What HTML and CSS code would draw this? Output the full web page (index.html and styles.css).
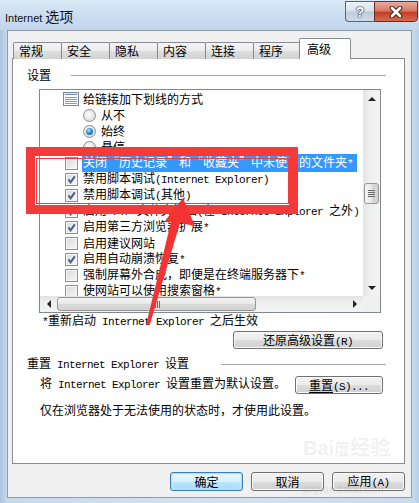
FILE: index.html
```html
<!DOCTYPE html>
<html lang="zh-CN">
<head>
  <meta charset="UTF-8" />
  <meta name="viewport" content="width=device-width, initial-scale=1.0"/>
  <title>Internet 选项</title>
  <link rel="stylesheet" href="styles.css">
</head>
<body>
  <div class="window">
    <div class="titlebar">
      <span class="title">Internet <span class="title-cn">选项</span></span>
      <div class="caption">
        <span class="cap-btn help">?</span>
        <span class="cap-btn close">
          <svg width="16" height="12" viewBox="0 0 16 12">
            <path d="M4 2 L12 10 M12 2 L4 10" stroke="#4a2a24" stroke-width="4.6" stroke-linecap="round"/>
            <path d="M4 2 L12 10 M12 2 L4 10" stroke="#fff" stroke-width="2.6" stroke-linecap="round"/>
          </svg>
        </span>
      </div>
    </div>

    <div class="client">
      <ul class="tabs">
        <li>常规</li>
        <li>安全</li>
        <li>隐私</li>
        <li>内容</li>
        <li>连接</li>
        <li>程序</li>
        <li class="active">高级</li>
      </ul>

      <div class="panel">
        <div class="group-head">
          <span>设置</span>
          <i class="rule rule-first"></i>
        </div>

        <div class="listbox">
          <div class="rows">
            <div class="row">
              <svg class="ico" width="16" height="14" viewBox="0 0 16 14">
                <rect x="0.5" y="0.5" width="15" height="13" fill="#fff" stroke="#7d8896"/>
                <rect x="1" y="1" width="14" height="2" fill="#dfe6ee"/>
                <path d="M2 2.5 H14" stroke="#6f8fb8"/>
                <path d="M2 5.5 H14 M2 7.5 H14 M2 9.5 H14 M2 11.5 H14" stroke="#8d98a6"/>
              </svg>
              <span>给链接加下划线的方式</span>
            </div>
            <div class="row radio"><span class="rb"></span><span>从不</span></div>
            <div class="row radio"><span class="rb on"></span><span>始终</span></div>
            <div class="row radio"><span class="rb"></span><span>悬停</span></div>
            <div class="row">
              <span class="cb"></span>
              <span class="sel">关闭“历史记录”和“收藏夹”中未使用的文件夹<span class="en">*</span></span>
            </div>
            <div class="row">
              <span class="cb"><svg viewBox="0 0 11 11"><path d="M2.5 5.5 L4.6 8.3 L8.8 2.4"/></svg></span>
              <span>禁用脚本调试<span class="en">(Internet Explorer)</span></span>
            </div>
            <div class="row">
              <span class="cb"><svg viewBox="0 0 11 11"><path d="M2.5 5.5 L4.6 8.3 L8.8 2.4"/></svg></span>
              <span>禁用脚本调试<span class="en">(</span>其他<span class="en">)</span></span>
            </div>
            <div class="row">
              <span class="cb"><svg viewBox="0 0 11 11"><path d="M2.5 5.5 L4.6 8.3 L8.8 2.4"/></svg></span>
              <span>启用<span class="en"> FTP </span>文件夹视图<span class="en">(</span>在<span class="en"> Internet Explorer </span>之外<span class="en">)</span></span>
            </div>
            <div class="row">
              <span class="cb"><svg viewBox="0 0 11 11"><path d="M2.5 5.5 L4.6 8.3 L8.8 2.4"/></svg></span>
              <span>启用第三方浏览器扩展<span class="en">*</span></span>
            </div>
            <div class="row"><span class="cb"></span><span>启用建议网站</span></div>
            <div class="row">
              <span class="cb"><svg viewBox="0 0 11 11"><path d="M2.5 5.5 L4.6 8.3 L8.8 2.4"/></svg></span>
              <span>启用自动崩溃恢复<span class="en">*</span></span>
            </div>
            <div class="row"><span class="cb"></span><span>强制屏幕外合成，即便是在终端服务器下<span class="en">*</span></span></div>
            <div class="row"><span class="cb"></span><span>使网站可以使用搜索窗格<span class="en">*</span></span></div>
          </div>

          <div class="vscroll">
            <div class="sb-btn"><i class="tri up"></i></div>
            <div class="sb-gap v-top"></div>
            <div class="thumb v-thumb"><i></i><i></i><i></i><i></i></div>
            <div class="sb-gap v-rest"></div>
            <div class="sb-btn"><i class="tri down"></i></div>
          </div>
          <div class="hscroll">
            <div class="sb-btn"><i class="tri left"></i></div>
            <div class="thumb h-thumb"><i></i><i></i><i></i><i></i></div>
            <div class="sb-gap h-rest"></div>
            <div class="sb-btn"><i class="tri right"></i></div>
          </div>
          <div class="corner"></div>
        </div>

        <p class="note"><span class="en">*</span>重新启动<span class="en"> Internet Explorer </span>之后生效</p>

        <div class="restore-row">
          <button class="btn restore">还原高级设置<span class="en">(R)</span></button>
        </div>

        <div class="group-head second">
          <span>重置<span class="en"> Internet Explorer </span>设置</span>
          <i class="rule rule-second"></i>
        </div>

        <div class="reset-row">
          <span class="reset-text">将<span class="en"> Internet Explorer </span>设置重置为默认设置。</span>
          <button class="btn reset"><u>重置</u><span class="en">(S)...</span></button>
        </div>

        <p class="hint">仅在浏览器处于无法使用的状态时，才使用此设置。</p>
      </div>

      <div class="actions">
        <button class="btn default">确定</button>
        <button class="btn">取消</button>
        <button class="btn">应用<span class="en">(A)</span></button>
      </div>
    </div>

    <!-- annotation drawn over the dialog -->
    <div class="mark"></div>
    <svg class="arrow" width="419" height="503" viewBox="0 0 419 503">
      <polygon points="183,198 195,226 180,223 150,324 146,325 171,222 164,222" fill="#f53232"/>
    </svg>
    <div class="watermark">Bai<span>度</span>经验<small>jingyan.baidu.com</small></div>
  </div>
</body>
</html>
```

FILE: styles.css
```css
* {
  box-sizing: border-box;
  margin: 0;
  padding: 0;
}

body {
  width: 419px;
  height: 503px;
  overflow: hidden;
  font-family: "Noto Sans CJK SC", sans-serif;
  font-size: 12px;
  color: #000;
  background: #c4d8ec;
}

.en {
  font-family: "Liberation Mono", monospace;
  font-size: 11px;
  letter-spacing: -0.6px;
}

.window {
  position: relative;
  height: 503px;
  display: flex;
  flex-direction: column;
  padding: 0 7px 5px 7px;
  background: linear-gradient(90deg, #a9c4dd 0px, #c6daee 7px, #d2e2f2 50%, #c9dcef 412px, #b7cfe6 419px);
}

/* title bar */
.titlebar {
  height: 30px;
  display: flex;
  align-items: flex-start;
  background: linear-gradient(180deg, #dbe8f5 0%, #c9dcef 60%, #c2d6eb 100%);
  margin: 0 -7px;
  padding: 0 7px;
}

.title {
  margin: 8px 0 0 -2px;
  font-family: "Liberation Sans", "Noto Sans CJK SC", sans-serif;
  font-size: 11px;
  line-height: 16px;
  color: #111;
}

.title-cn {
  font-family: "Noto Sans CJK SC", sans-serif;
  font-size: 14px;
}

.caption {
  margin: 1px -6px 0 auto;
  display: flex;
}

.cap-btn {
  height: 21px;
  display: flex;
  align-items: center;
  justify-content: center;
  border: 1px solid #56657a;
}

.help {
  width: 29px;
  border-right: none;
  border-radius: 0 0 0 4px;
  background: linear-gradient(180deg, #edf2f8 0%, #d8e2ed 48%, #bccbdc 52%, #cfdbe8 100%);
  font-family: "Liberation Sans", sans-serif;
  font-weight: bold;
  font-size: 14px;
  color: #fff;
  text-shadow: 0 0 1px #2c3a4c, 0 0 1px #2c3a4c, 0 0 2px #2c3a4c;
}

.close {
  width: 44px;
  border-color: #6b2b20;
  border-radius: 0 0 4px 0;
  background: linear-gradient(180deg, #e9aa9c 0%, #d97a66 45%, #c3412b 55%, #d46a4e 100%);
}

/* client area */
.client {
  flex: 1;
  background: #f0f0f0;
  border: 1px solid #8e9bab;
  padding: 7px 6px 0 4px;
  display: flex;
  flex-direction: column;
}

.tabs {
  display: flex;
  align-items: flex-end;
  list-style: none;
  height: 21px;
  margin: 0 0 -1px 1px;
  position: relative;
  z-index: 1;
}

.tabs li {
  width: 49px;
  height: 17px;
  margin-right: -1px;
  padding-left: 5px;
  line-height: 16px;
  border: 1px solid #898c95;
  border-bottom: none;
  border-radius: 2px 2px 0 0;
  background: linear-gradient(180deg, #f4f4f4 0%, #ebebeb 50%, #dedede 51%, #d3d3d3 100%);
}

.tabs li.active {
  width: 52px;
  height: 21px;
  margin-left: -2px;
  padding-left: 7px;
  line-height: 19px;
  background: #fff;
  position: relative;
}

.panel {
  height: 406px;
  background: #fff;
  border: 1px solid #898c95;
  padding: 8px 18px 0 14px;
}

.group-head {
  height: 16px;
  display: flex;
  align-items: center;
  line-height: 16px;
  white-space: nowrap;
}

.rule {
  flex: 1;
  height: 1px;
  background: #a5a5a5;
}

.rule-first {
  margin-left: 20px;
}

.rule-second {
  margin-left: 32px;
}

/* list with scroll bars */
.listbox {
  width: 342px;
  height: 224px;
  margin: 6px 0 0 12px;
  border: 1px solid #828790;
  background: #fff;
  display: grid;
  grid-template-columns: 1fr 17px;
  grid-template-rows: 1fr 16px;
}

.rows {
  overflow: hidden;
  padding-top: 1px;
}

.row {
  height: 16px;
  display: flex;
  align-items: center;
  padding-left: 25px;
  line-height: 16px;
  white-space: nowrap;
}

.row .ico {
  margin: 0 4px 0 -2px;
  flex: none;
}

.row.radio {
  padding-left: 43px;
}

.cb,
.rb {
  width: 13px;
  height: 13px;
  margin-right: 5px;
  flex: none;
  border: 1px solid #8e8f8f;
  display: flex;
  align-items: center;
  justify-content: center;
}

.cb {
  background: linear-gradient(135deg, #d8d8d8, #f8f8f8);
  box-shadow: inset 0 0 0 1px #f6f6f6;
}

.cb svg {
  width: 11px;
  height: 11px;
  fill: none;
  stroke: #3f5a99;
  stroke-width: 1.9;
}

.rb {
  border-radius: 50%;
  background: radial-gradient(circle at 45% 40%, #fdfdfd 0%, #e4e4e4 60%, #cfcfcf 100%);
}

.rb.on::after {
  content: "";
  width: 7px;
  height: 7px;
  border-radius: 50%;
  background: radial-gradient(circle at 40% 35%, #b5e6ff 0%, #2f8fd8 45%, #0c4a8c 100%);
}

.sel {
  background: #3399ff;
  color: #fff;
  padding: 0 4px 0 1px;
  margin-left: -1px;
}

.vscroll,
.hscroll {
  display: flex;
  background: #ececec;
}

.vscroll {
  flex-direction: column;
  background: linear-gradient(90deg, #e3e3e3, #efefef 40%, #f4f4f4);
}

.hscroll {
  background: linear-gradient(180deg, #e3e3e3, #efefef 40%, #f4f4f4);
}

.sb-btn {
  width: 17px;
  height: 17px;
  flex: none;
  display: flex;
  align-items: center;
  justify-content: center;
}

.hscroll .sb-btn {
  height: 16px;
}

.tri {
  width: 0;
  height: 0;
  border: 4px solid transparent;
}

.tri.up {
  border-bottom-color: #222;
  border-top-width: 0;
}

.tri.down {
  border-top-color: #222;
  border-bottom-width: 0;
}

.tri.left {
  border-right-color: #222;
  border-left-width: 0;
}

.tri.right {
  border-left-color: #222;
  border-right-width: 0;
}

.v-top {
  height: 118px;
  flex: none;
}

.sb-gap {
  flex: 1;
}

.thumb {
  flex: none;
  border: 1px solid #979797;
  border-radius: 3px;
  display: flex;
  align-items: center;
  justify-content: center;
  gap: 1px;
}

.v-thumb {
  height: 21px;
  margin: 0 1px;
  flex-direction: column;
  background: linear-gradient(90deg, #f4f4f4, #e9e9e9 50%, #dadada 51%, #d2d2d2);
}

.v-thumb i {
  width: 7px;
  height: 1px;
  background: #6a6a6a;
}

.h-thumb {
  width: 199px;
  margin: 1px 0;
  background: linear-gradient(180deg, #f4f4f4, #e9e9e9 50%, #dadada 51%, #d2d2d2);
}

.h-thumb i {
  width: 1px;
  height: 7px;
  background: #6a6a6a;
}

.corner {
  background: #f0f0f0;
}

.note {
  margin-left: 15px;
  line-height: 14px;
  height: 14px;
  white-space: nowrap;
}

/* buttons */
.btn {
  font-family: "Noto Sans CJK SC", sans-serif;
  font-size: 12px;
  line-height: 15px;
  color: #000;
  height: 19px;
  border: 1px solid #707070;
  border-radius: 3px;
  background: linear-gradient(180deg, #f2f2f2 0%, #ebebeb 50%, #dddddd 51%, #cfcfcf 100%);
  box-shadow: inset 0 0 0 1px #fbfbfb;
  white-space: nowrap;
}

.btn u {
  text-underline-offset: 2px;
}

.restore-row {
  margin-top: 4px;
  display: flex;
  justify-content: flex-end;
}

.btn.restore {
  width: 150px;
  height: 18px;
  margin-right: 3px;
}

.group-head.second {
  margin-top: 7px;
}

.reset-row {
  margin-top: 4px;
  display: flex;
  align-items: flex-start;
  justify-content: space-between;
}

.reset-text {
  margin-left: 13px;
  line-height: 14px;
  white-space: nowrap;
}

.btn.reset {
  width: 88px;
  height: 18px;
  margin-right: 3px;
}

.hint {
  margin: 9px 0 0 13px;
  line-height: 14px;
  white-space: nowrap;
}

.actions {
  margin-top: 8px;
  display: flex;
  justify-content: flex-end;
  gap: 8px;
}

.actions .btn {
  width: 73px;
}

.btn.default {
  border-color: #3c7fb1;
  box-shadow: inset 0 0 0 1px #9fe2fb, inset 0 0 2px 1px #c4effd;
  background: linear-gradient(180deg, #eaf6fd 0%, #d9f0fc 50%, #bee6fd 51%, #a7d9f5 100%);
}

/* red annotation */
.mark {
  position: absolute;
  left: 26px;
  top: 147px;
  width: 272px;
  height: 67px;
  border: 9px solid #f53a3a;
}

.mark::after {
  content: "";
  position: absolute;
  inset: 2px 0 1px 1px;
  border: 1px solid #f53a3a;
}

.arrow {
  position: absolute;
  left: 0;
  top: 0;
  pointer-events: none;
}

.watermark {
  position: absolute;
  left: 303px;
  top: 436px;
  font-family: "Liberation Sans", "Noto Sans CJK SC", sans-serif;
  font-size: 20px;
  font-weight: bold;
  line-height: 24px;
  color: rgba(150, 150, 150, 0.13);
}

.watermark span {
  font-size: 16px;
}

.watermark small {
  display: block;
  font-size: 10px;
  font-weight: normal;
  line-height: 12px;
  margin: 22px 0 0 0;
  color: rgba(120, 120, 120, 0.18);
}
```
